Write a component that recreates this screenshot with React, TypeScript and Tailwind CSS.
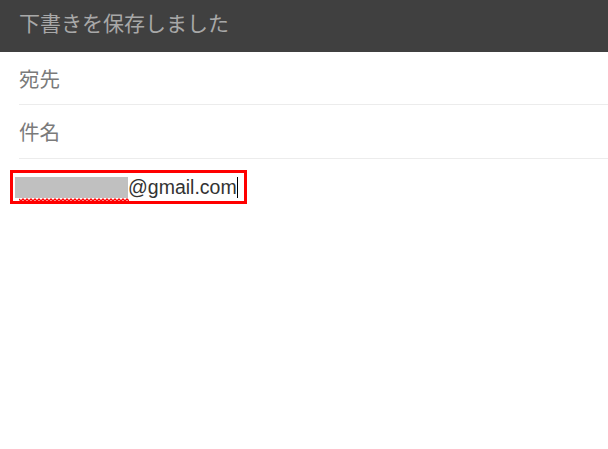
export default function App() {
  const jp = { fontFamily: '"Noto Sans CJK JP", "Noto Sans", sans-serif' };

  return (
    <div className="w-[608px] h-[449px] bg-white overflow-hidden" style={jp}>
      {/* toast header */}
      <div className="h-[52px] bg-[#404040] px-[19px] pt-[7px] text-[21px] leading-[30px] text-[#a8a8a8]">
        下書きを保存しました
      </div>

      {/* fields */}
      <div className="ml-[19px] h-[53px] flex items-center border-b border-[#ececec] text-[20.5px] text-[#7a7a7a]">
        宛先
      </div>
      <div className="ml-[19px] h-[54px] flex items-center border-b border-[#ececec] text-[20.5px] text-[#7a7a7a]">
        件名
      </div>

      {/* highlighted body */}
      <div className="mt-[11px] ml-[10px] w-[237px] h-[34px] border-[3px] border-[#ff0000] flex items-center pl-[2px]">
        <div className="relative w-[113px] h-[21px] bg-[#c0c0c0] shrink-0">
          <svg className="absolute left-[4px] top-[21px]" width="110" height="4" viewBox="0 0 110 4">
            <path
              d="M0 1 l2 2 l2 -2 l2 2 l2 -2 l2 2 l2 -2 l2 2 l2 -2 l2 2 l2 -2 l2 2 l2 -2 l2 2 l2 -2 l2 2 l2 -2 l2 2 l2 -2 l2 2 l2 -2 l2 2 l2 -2 l2 2 l2 -2 l2 2 l2 -2 l2 2 l2 -2 l2 2 l2 -2 l2 2 l2 -2 l2 2 l2 -2 l2 2 l2 -2 l2 2 l2 -2 l2 2 l2 -2 l2 2 l2 -2 l2 2 l2 -2 l2 2 l2 -2 l2 2 l2 -2 l2 2 l2 -2 l2 2 l2 -2 l2 2 l2 -2 l2 2 l2 -2 l2 2 l2 -2 l2 2 l2 -2 l2 2 l2 -2"
              fill="none"
              stroke="#ff0000"
              strokeWidth="1.4"
            />
          </svg>
        </div>
        <span
          className="text-[19.5px] leading-[22px] text-[#333333]"
          style={{ fontFamily: '"Liberation Sans", Arial, sans-serif' }}
        >
          @gmail.com
        </span>
        <span className="w-px h-[21px] bg-black" />
      </div>
    </div>
  );
}
